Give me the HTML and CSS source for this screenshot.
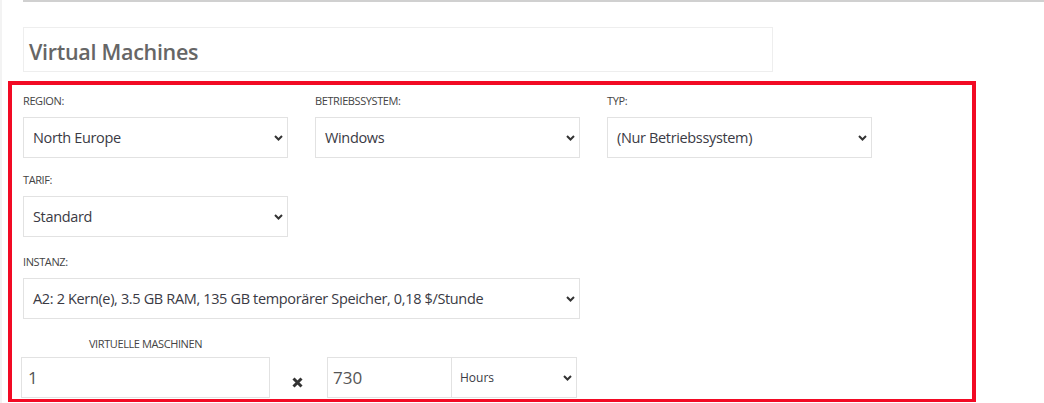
FILE: index.html
```html
<!DOCTYPE html>
<html lang="de">
<head>
<meta charset="utf-8">
<title>Virtual Machines</title>
<link rel="stylesheet" href="styles.css">
</head>
<body>
<div class="page">
  <div class="topline"></div>
  <div class="titlebox"><h2 class="title">Virtual Machines</h2></div>
  <section class="calc">
    <div class="row row-1">
      <div class="field">
        <label class="lbl">REGION:</label>
        <div class="sel"><span>North Europe</span><svg class="chev" width="9" height="6" viewBox="0 0 9 6"><path d="M1 1 L4.5 4.5 L8 1" fill="none" stroke="#333" stroke-width="2"/></svg></div>
      </div>
      <div class="field">
        <label class="lbl">BETRIEBSSYSTEM:</label>
        <div class="sel"><span>Windows</span><svg class="chev" width="9" height="6" viewBox="0 0 9 6"><path d="M1 1 L4.5 4.5 L8 1" fill="none" stroke="#333" stroke-width="2"/></svg></div>
      </div>
      <div class="field">
        <label class="lbl">TYP:</label>
        <div class="sel"><span>(Nur Betriebssystem)</span><svg class="chev" width="9" height="6" viewBox="0 0 9 6"><path d="M1 1 L4.5 4.5 L8 1" fill="none" stroke="#333" stroke-width="2"/></svg></div>
      </div>
    </div>
    <div class="row row-2">
      <div class="field">
        <label class="lbl">TARIF:</label>
        <div class="sel"><span>Standard</span><svg class="chev" width="9" height="6" viewBox="0 0 9 6"><path d="M1 1 L4.5 4.5 L8 1" fill="none" stroke="#333" stroke-width="2"/></svg></div>
      </div>
    </div>
    <div class="row row-3">
      <div class="field wide">
        <label class="lbl">INSTANZ:</label>
        <div class="sel"><span>A2: 2 Kern(e), 3.5 GB RAM, 135 GB temporärer Speicher, 0,18 $/Stunde</span><svg class="chev" width="9" height="6" viewBox="0 0 9 6"><path d="M1 1 L4.5 4.5 L8 1" fill="none" stroke="#333" stroke-width="2"/></svg></div>
      </div>
    </div>
    <div class="row row-4">
      <div class="vm">
        <label class="lbl lbl-center">VIRTUELLE MASCHINEN</label>
        <div class="inp inp-vm">1</div>
      </div>
      <div class="times"><svg width="11" height="11" viewBox="0 0 11 11"><path d="M1.5 1.5 L9.5 9.5 M9.5 1.5 L1.5 9.5" stroke="#333" stroke-width="3" stroke-linecap="butt"/></svg></div>
      <div class="hours">
        <div class="inp inp-h">730</div>
        <div class="sel sel-h"><span>Hours</span><svg class="chev" width="9" height="6" viewBox="0 0 9 6"><path d="M1 1 L4.5 4.5 L8 1" fill="none" stroke="#333" stroke-width="2"/></svg></div>
      </div>
    </div>
  </section>
</div>
</body>
</html>
```

FILE: styles.css
```css
* { box-sizing: border-box; }
html, body { margin: 0; padding: 0; background: #fff; }
body {
  font-family: "Open Sans", "Noto Sans", sans-serif;
  color: #333;
  height: 403px;
  overflow: hidden;
  border-left: 2px solid #f3f3f3;
}
.page { width: 1042px; }
.topline {
  margin-left: 21px;
  height: 2px;
  background: #d0d0d0;
}
.titlebox {
  margin: 25px 0 0 21px;
  width: 750px;
  height: 45px;
  border: 1px solid #eeeeee;
  display: flex;
  align-items: center;
  padding: 3px 0 0 5px;
}
.title {
  margin: 0;
  font-size: 21.5px;
  font-weight: 600;
  color: #666;
  letter-spacing: -0.3px;
}
.calc {
  margin: 9px 0 0 6px;
  width: 968px;
  border: 4px solid #f20a24;
  border-bottom-width: 3px;
  padding: 9px 0 0 11px;
  height: 321px;
  overflow: hidden;
}
.row { display: flex; gap: 27px; }
.row-1 { margin-bottom: 15px; }
.row-2 { margin-bottom: 18px; }
.row-3 { margin-bottom: 18px; }
.field { width: 265px; }
.field.wide { width: 557px; }
.lbl {
  display: block;
  font-size: 11px;
  line-height: 14px;
  height: 14px;
  color: #444;
  letter-spacing: -0.4px;
  margin-bottom: 9px;
}
.sel {
  height: 41px;
  border: 1px solid #e2e2e2;
  display: flex;
  align-items: center;
  justify-content: space-between;
  padding: 0 4px 0 9px;
  font-size: 14.5px;
  letter-spacing: -0.35px;
  color: #3a3a44;
  background: #fff;
}
.sel span { white-space: nowrap; }
.chev { flex: none; }
.row-4 { gap: 0; align-items: flex-end; margin-left: -2px; }
.vm { width: 249px; }
.lbl-center { text-align: center; margin-bottom: 6px; }
.inp {
  height: 41px;
  border: 1px solid #e2e2e2;
  display: flex;
  align-items: center;
  font-size: 17px;
  color: #555;
  background: #fff;
}
.inp-vm { padding-left: 6px; }
.times {
  width: 57px;
  height: 41px;
  display: flex;
  align-items: center;
  justify-content: center;
  padding-top: 10px;
  padding-right: 3px;
}
.hours { display: flex; }
.inp-h { width: 125px; padding-left: 5px; }
.sel-h {
  width: 125px;
  border-left: none;
  font-size: 12px;
  letter-spacing: 0;
  font-weight: 400;
  padding-left: 8px;
}
```
